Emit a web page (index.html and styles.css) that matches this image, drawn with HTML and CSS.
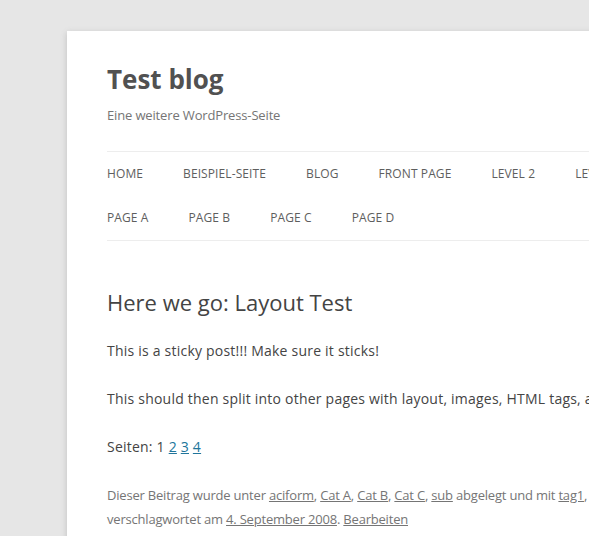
FILE: index.html
```html
<!DOCTYPE html>
<html lang="de">
<head>
<meta charset="utf-8">
<title>Test blog</title>
<link rel="stylesheet" href="styles.css">
</head>
<body>
<div class="site">
  <header class="site-header">
    <h1 class="site-title"><a href="#">Test blog</a></h1>
    <h2 class="site-description">Eine weitere WordPress-Seite</h2>
    <nav class="main-navigation">
      <ul class="nav-menu">
        <li><a href="#">Home</a></li>
        <li><a href="#">Beispiel-Seite</a></li>
        <li><a href="#">Blog</a></li>
        <li><a href="#">Front Page</a></li>
        <li><a href="#">Level 2</a></li>
        <li><a href="#">Level 3</a></li>
        <li><a href="#">Lorem Ipsum</a></li>
        <li class="break"></li>
        <li><a href="#">Page A</a></li>
        <li><a href="#">Page B</a></li>
        <li><a href="#">Page C</a></li>
        <li><a href="#">Page D</a></li>
      </ul>
    </nav>
  </header>
  <main class="site-content">
    <article class="post">
      <header class="entry-header">
        <h1 class="entry-title"><a href="#">Here we go: Layout Test</a></h1>
      </header>
      <div class="entry-content">
        <p>This is a sticky post!!! Make sure it sticks!</p>
        <p>This should then split into other pages with layout, images, HTML tags, and other things.</p>
        <div class="page-links">Seiten: 1 <a href="#">2</a> <a href="#">3</a> <a href="#">4</a></div>
      </div>
      <footer class="entry-meta">
        Dieser Beitrag wurde unter <a href="#">aciform</a>, <a href="#">Cat A</a>, <a href="#">Cat B</a>, <a href="#">Cat C</a>, <a href="#">sub</a> abgelegt und mit <a href="#">tag1</a>, <a href="#">tag2</a>, <a href="#">tag3</a> verschlagwortet am <a href="#">4. September 2008</a>. <a href="#">Bearbeiten</a>
      </footer>
    </article>
  </main>
</div>
</body>
</html>
```
FILE: styles.css
```css
html, body {
  margin: 0;
  padding: 0;
  overflow: hidden;
}
body {
  background: #e6e6e6;
  font-family: "Open Sans", "Liberation Sans", sans-serif;
  color: #444;
  font-size: 14px;
  line-height: 1.714285714;
}
a {
  color: #21759b;
}
.site {
  margin: 31px 0 0 67px;
  width: 880px;
  padding: 0 40px;
  background: #fff;
  box-shadow: 0 2px 6px rgba(100, 100, 100, 0.3);
  min-height: 700px;
}
.site-header {
  padding: 24px 0 0;
}
.site-title {
  margin: 0;
  font-size: 26px;
  font-weight: bold;
  line-height: 48px;
}
.site-title a {
  color: #515151;
  text-decoration: none;
}
.site-description {
  margin: 0;
  font-size: 13px;
  font-weight: normal;
  line-height: 24px;
  color: #757575;
  letter-spacing: -0.15px;
}
.main-navigation {
  margin-top: 24px;
  border-top: 1px solid #ededed;
  border-bottom: 1px solid #ededed;
}
.nav-menu {
  list-style: none;
  margin: 0;
  padding: 0;
  display: flex;
  flex-wrap: wrap;
}
.nav-menu li {
  margin-right: 40px;
  font-size: 12px;
  line-height: 44px;
  text-transform: uppercase;
  white-space: nowrap;
  letter-spacing: 0.1px;
}
.nav-menu li.break {
  flex-basis: 100%;
  height: 0;
  margin: 0;
}
.nav-menu a {
  color: #5e5e5e;
  text-decoration: none;
}
.site-content {
  width: 620px;
  padding-top: 48px;
}
.entry-header {
  margin-bottom: 24px;
}
.entry-title {
  margin: 0;
  font-size: 22px;
  font-weight: normal;
  line-height: 1.2;
}
.entry-title a {
  color: #444;
  text-decoration: none;
}
.entry-content {
  letter-spacing: 0.22px;
}
.entry-content p {
  margin: 0 0 24px;
}
.page-links {
  line-height: 24px;
}
.entry-meta {
  margin-top: 24px;
  font-size: 13px;
  line-height: 24px;
  color: #757575;
  letter-spacing: -0.2px;
}
.entry-meta a {
  color: #757575;
}
```
